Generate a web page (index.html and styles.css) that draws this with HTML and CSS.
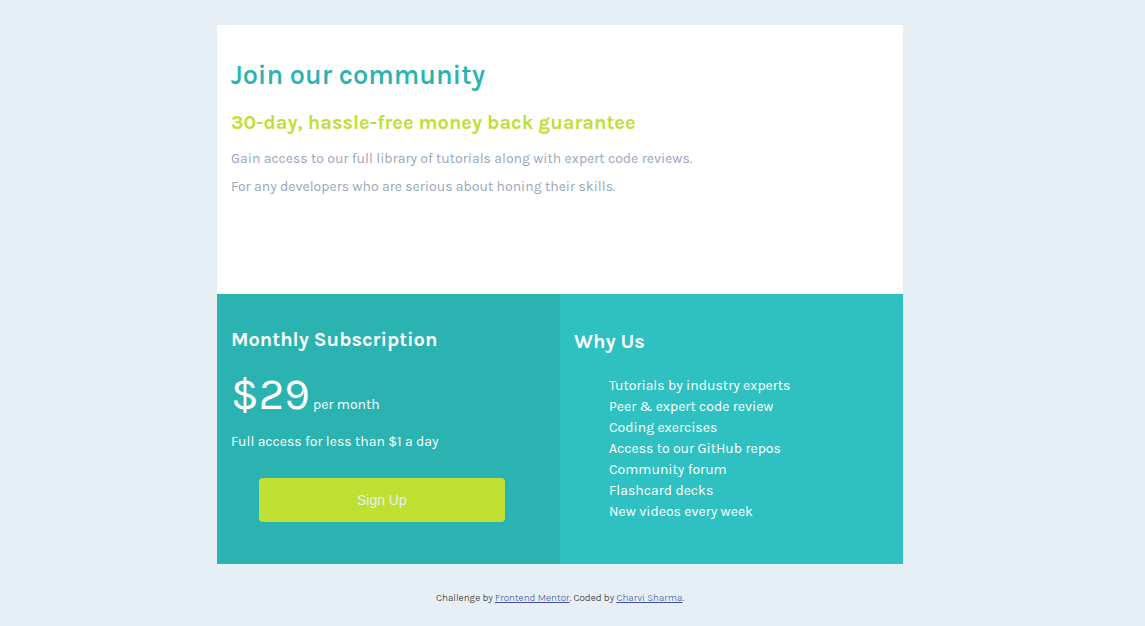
FILE: index.html
```html
<!DOCTYPE html>
<html lang="en">
<head>
<meta charset="utf-8">
<meta name="viewport" content="width=device-width, initial-scale=1">
<title>Join our community</title>
<link rel="stylesheet" href="styles.css">
</head>
<body>
<main class="card">
  <section class="intro">
    <h1 class="intro-title">Join our community</h1>
    <h2 class="intro-subtitle">30-day, hassle-free money back guarantee</h2>
    <p class="intro-text">Gain access to our full library of tutorials along with expert code reviews.</p>
    <p class="intro-text">For any developers who are serious about honing their skills.</p>
  </section>
  <section class="plan">
    <h2 class="panel-title">Monthly Subscription</h2>
    <p class="price"><span class="amount">$29</span> per month</p>
    <p class="note">Full access for less than $1 a day</p>
    <button class="signup" type="button">Sign Up</button>
  </section>
  <section class="why">
    <h2 class="panel-title">Why Us</h2>
    <ul class="reasons">
      <li>Tutorials by industry experts</li>
      <li>Peer &amp; expert code review</li>
      <li>Coding exercises</li>
      <li>Access to our GitHub repos</li>
      <li>Community forum</li>
      <li>Flashcard decks</li>
      <li>New videos every week</li>
    </ul>
  </section>
</main>
<footer class="attribution">Challenge by <a class="credit" href="#">Frontend Mentor</a>. Coded by <a class="credit" href="#">Charvi Sharma</a>.</footer>
</body>
</html>
```
FILE: styles.css
```css
* { box-sizing: border-box; }
body {
  margin: 0;
  padding: 25px 25px 0 0;
  background: #e6eff6;
  font-family: Karla, Inter, sans-serif;
  font-size: 14px;
  line-height: 20px;
}
h1, h2, p, ul { margin: 0; }
.card {
  display: grid;
  grid-template-columns: 1fr 1fr;
  width: 61.25%;
  margin: 0 auto;
}
.intro {
  grid-column: 1 / -1;
  padding: 34px 14px 89px;
  background: #fff;
}
.intro-title {
  color: #2bb3b1;
  font-size: 27px;
  line-height: 32px;
  font-weight: 600;
}
.intro-subtitle {
  margin: 19px 0 13px;
  color: #bfdf32;
  font-size: 20px;
  line-height: 26px;
  font-weight: 700;
}
.intro-text {
  margin-bottom: 8px;
  color: #98a6bd;
}
.plan, .why {
  padding: 33px 14px 42px;
  color: #fff;
}
.plan { background: #2bb3b1; }
.why {
  padding-top: 35px;
  background: #2fc1c1;
}
.panel-title {
  font-size: 20px;
  line-height: 26px;
  font-weight: 700;
}
.price {
  margin: 17px 0 2px;
  line-height: 50px;
}
.amount { font-size: 44px; }
.signup {
  display: block;
  width: 78%;
  height: 44px;
  margin: 26px 0 0 28px;
  border: 0;
  border-radius: 4px;
  background: #bfdf32;
  color: #e6eff6;
  font: 14px/20px "Liberation Sans", sans-serif;
}
.reasons {
  padding: 0 0 0 35px;
  margin-top: 20px;
  list-style: none;
  line-height: 21px;
}
.attribution {
  margin-top: 27px;
  color: #222;
  font-size: 10px;
  line-height: 14px;
  font-weight: 300;
  text-align: center;
}
.credit { color: #3e52a3; }
```
